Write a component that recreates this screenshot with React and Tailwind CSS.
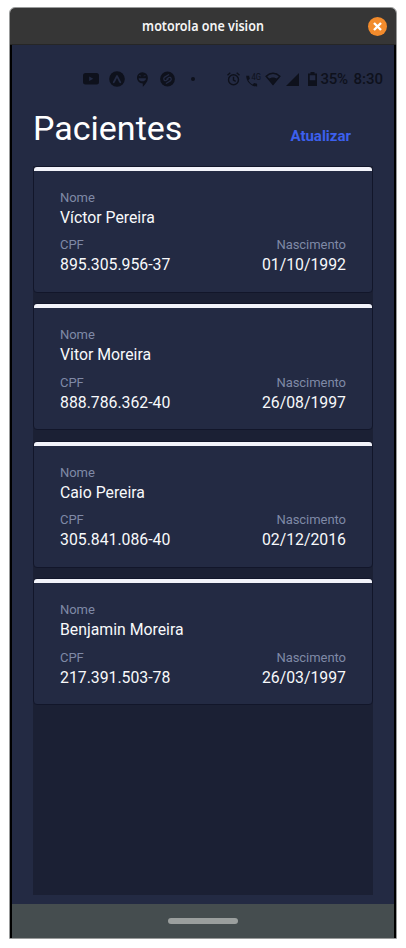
import React from "react";

const patients = [
  { name: "Víctor Pereira", cpf: "895.305.956-37", birth: "01/10/1992" },
  { name: "Vitor Moreira", cpf: "888.786.362-40", birth: "26/08/1997" },
  { name: "Caio Pereira", cpf: "305.841.086-40", birth: "02/12/2016" },
  { name: "Benjamin Moreira", cpf: "217.391.503-78", birth: "26/03/1997" },
];

function TitleBar() {
  return (
    <header className="grid h-[37px] shrink-0 grid-cols-[28px_1fr_28px] items-center border-b border-[#262626] bg-[#363636]">
      <span />
      <h1 className="origin-center scale-x-[0.895] text-center font-['Noto_Sans',sans-serif] text-[14px] leading-5 font-semibold whitespace-nowrap text-[#f5f5f5]">
        motorola one vision
      </h1>
      <button className="flex size-[19px] items-center justify-center rounded-full bg-[#f28b2c]" aria-label="Fechar">
        <svg width="9" height="9" viewBox="0 0 9 9" stroke="#fff" strokeWidth="2.4">
          <path d="M1 1l7 7M8 1l-7 7" />
        </svg>
      </button>
    </header>
  );
}

function StatusBar() {
  return (
    <div className="flex h-[65px] shrink-0 items-end pb-[23px] text-[#0e111c]">
      <div className="ml-[71px] flex h-4 shrink-0 items-center">
        <svg width="16" height="12" viewBox="0 0 16 12">
          <rect width="16" height="11.5" rx="2.5" fill="currentColor" />
          <path d="M6.2 3.5v4.6l4.1-2.3z" fill="#232a43" />
        </svg>
        <svg className="ml-[9.500px]" width="16" height="16" viewBox="0 0 16 16">
          <circle cx="8" cy="8" r="7.8" fill="currentColor" />
          <path d="M4.7 11.2C6 9.5 6.9 6.4 8 5.2c1.100 1.200 2 4.300 3.300 6" fill="none" stroke="#232a43" strokeWidth="1.8" strokeLinecap="round" />
        </svg>
        <svg className="ml-[11px]" width="13" height="15" viewBox="0 0 13 15">
          <path d="M6.300.2a5.600 5.600 0 0 1 5.600 5.600c0 3.700-2.800 6.900-5.100 9v-3.400A5.600 5.600 0 1 1 6.300.2z" fill="currentColor" />
          <path d="M2.600 6.200h7.400c0 4.200-7.400 4.200-7.400 0z" fill="#232a43" />
          <path d="M3 3.400l2 .6M9.600 3.400l-2 .6" fill="none" stroke="#232a43" strokeWidth=".7" />
        </svg>
        <svg className="ml-[11.500px]" width="15" height="16" viewBox="0 0 15 16">
          <circle cx="7.500" cy="8" r="7.400" fill="currentColor" />
          <path d="M8.600 3.700 4.700 6.100c-2 1.600-.5 4.400 1.500 3.400l1.900-1.400M6.400 12.300l3.900-2.400c2-1.600.5-4.400-1.500-3.400l-1.900 1.400" fill="none" stroke="#232a43" strokeWidth="1.300" strokeLinecap="round" />
        </svg>
        <span className="ml-[16px] size-1 rounded-full bg-[#0e111c]" />
      </div>
      <div className="ml-[32px] flex h-4 shrink-0 items-center">
        <svg className="shrink-0" width="13" height="14" viewBox="0 0 13 14" fill="none" stroke="currentColor" strokeWidth="1.400">
          <circle cx="6.500" cy="7.700" r="5" />
          <path d="M.5 3.200 3.300.8M12.500 3.200 9.700.8M6.500 4.700v3.300l2.200 1.400" />
        </svg>
        <svg className="ml-[6px] shrink-0 overflow-visible" width="16" height="16" viewBox="0 0 16 16" fill="currentColor">
          <path d="M.2 4.700h2.900l.7 3-1.500 1.500c1 1.900 2.400 3.300 4.300 4.300l1.500-1.500 3 .7v2.900C5.300 15.600.2 10.500.2 4.700z" />
          <text x="5.400" y="8.500" fontFamily="Roboto, sans-serif" fontSize="9" textLength="9.600" lengthAdjust="spacingAndGlyphs">4G</text>
        </svg>
        <svg className="ml-[3px] shrink-0" width="16" height="14" viewBox="0 0 16 14">
          <path d="M1.200 4.200C5.200.4 10.800.4 14.800 4.200L8 12.300z" fill="none" stroke="currentColor" strokeWidth="1.500" />
          <path d="M3.300 7.100c3-2.200 6.400-2.200 9.400 0L8 13z" fill="currentColor" />
        </svg>
        <svg className="ml-[4.500px] shrink-0" width="13" height="13" viewBox="0 0 13 13">
          <path d="M13 0v13H0z" fill="currentColor" />
        </svg>
        <svg className="ml-[9px] shrink-0" width="9" height="14" viewBox="0 0 9 14">
          <path d="M2.500 0h4v1.500H9V14H0V1.500h2.500zM1.700 3.200v5h5.600v-5z" fill="currentColor" fillRule="evenodd" />
        </svg>
        <span className="ml-[4px] w-[33px] shrink-0 text-[15px] leading-4 font-medium tracking-[-0.25px] whitespace-nowrap">35%</span>
        <span className="text-[15px] leading-4 font-medium">8:30</span>
      </div>
    </div>
  );
}

function Field({ label, value, right = false }) {
  return (
    <div className={right ? "text-right" : ""}>
      <div className="text-[13px] leading-[18px] tracking-[-0.05px] text-[#7f89a6]">{label}</div>
      <div className="pt-px text-[15.8px] leading-5 text-[#f8f9fb]">{value}</div>
    </div>
  );
}

function PatientCard({ patient }) {
  return (
    <article className="h-[127px] shrink-0 overflow-hidden rounded-[4px] border border-[#12162a] bg-[#232a43]">
      <div className="h-1 bg-[#f2f3fa]" />
      <div className="px-[26px] pt-[18px]">
        <Field label="Nome" value={patient.name} />
        <div className="mt-[8.400px] flex justify-between">
          <Field label="CPF" value={patient.cpf} />
          <Field label="Nascimento" value={patient.birth} right />
        </div>
      </div>
    </article>
  );
}

export default function App() {
  return (
    <div className="h-[948px] w-[406px] overflow-hidden bg-white pt-[7px] pl-[9px] font-[Roboto,sans-serif]">
      <div className="flex h-[932px] w-[388px] flex-col overflow-hidden rounded-t-[6px] border border-[#999b9b]">
        <TitleBar />
        <div className="flex min-h-0 flex-1 flex-col border-x-2 border-black bg-[#232a43]">
          <StatusBar />
          <div className="flex h-14 shrink-0 items-start justify-between pr-[43px] pl-[21px]">
            <h2 className="-mt-[2px] text-[34px] leading-10 text-white">Pacientes</h2>
            <button className="mt-[16px] text-[15px] leading-5 font-bold text-[#3c60ee]">Atualizar</button>
          </div>
          <main className="mx-[21px] flex h-[729px] shrink-0 flex-col gap-[10.400px] bg-[#1b2034]">
            {patients.map((patient) => (
              <PatientCard key={patient.cpf} patient={patient} />
            ))}
          </main>
          <nav className="mt-auto flex h-[34px] shrink-0 items-center justify-center bg-[#454d4f]">
            <span className="h-1.5 w-[70px] rounded-full bg-[#9b9f9e]" />
          </nav>
        </div>
      </div>
    </div>
  );
}
